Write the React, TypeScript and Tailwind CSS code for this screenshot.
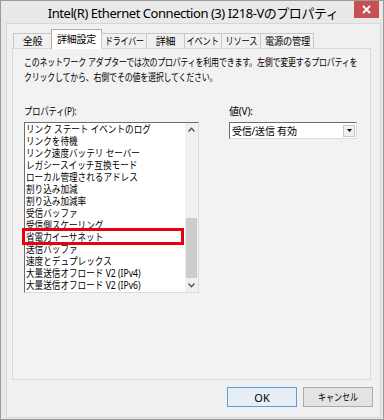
import React from 'react';

const tabs = [
  { label: '全般', w: 39, sx: 'scale-x-100' },
  { label: '詳細設定', w: 51, sx: 'scale-x-100', active: true },
  { label: 'ドライバー', w: 46, sx: 'scale-x-[0.8]' },
  { label: '詳細', w: 39, sx: 'scale-x-100' },
  { label: 'イベント', w: 38, sx: 'scale-x-[0.82]' },
  { label: 'リソース', w: 40, sx: 'scale-x-[0.82]' },
  { label: '電源の管理', w: 54, sx: 'scale-x-[0.92]' },
];

const items = [
  'リンク ステート イベントのログ',
  'リンクを待機',
  'リンク速度バッテリ セーバー',
  'レガシースイッチ互換モード',
  'ローカル管理されるアドレス',
  '割り込み加減',
  '割り込み加減率',
  '受信バッファ',
  '受信側スケーリング',
  '省電力イーサネット',
  '送信バッファ',
  '速度とデュプレックス',
  '大量送信オフロード V2 (IPv4)',
  '大量送信オフロード V2 (IPv6)',
];

const Chevron: React.FC<{ up?: boolean }> = ({ up }) => (
  <svg width="7" height="5" viewBox="0 0 7 5" className="block">
    <polyline
      points={up ? '0.5,4.5 3.5,1.2 6.5,4.5' : '0.5,0.5 3.5,3.8 6.5,0.5'}
      fill="none"
      stroke="#505050"
      strokeWidth="1.3"
    />
  </svg>
);

export default function App() {
  return (
    <div className="w-[384px] h-[420px] bg-[#e9e9e9] border border-[#9a9a9a] flex flex-col text-black [font-family:'Noto_Sans','Noto_Sans_CJK_JP',sans-serif] overflow-hidden">
      {/* title bar */}
      <div className="h-[22px] relative flex items-center justify-center">
        <span className="text-[13px] leading-none tracking-[-0.45px] pl-[2px] pt-[3px] whitespace-nowrap">
          Intel(R) Ethernet Connection (3) I218-Vのプロパティ
        </span>
        <div className="absolute right-[4px] top-[-1px] w-[25px] h-[18px] bg-[#c75050] flex items-center justify-center">
          <svg width="9" height="9" viewBox="0 0 9 9">
            <path d="M1 1 L8 8 M8 1 L1 8" stroke="#fff" strokeWidth="1.8" />
          </svg>
        </div>
      </div>

      {/* client area */}
      <div className="ml-[5px] w-[375px] h-[395px] bg-[#f0f0f0] border border-[#d6d6d6] pl-[5px] pt-[5px] flex flex-col">
        {/* tabs */}
        <div className="h-[20px] mb-[-1px] flex items-end pl-[1px] relative z-10">
          {tabs.map((t, i) => (
            <div
              key={t.label}
              style={{ width: t.w }}
              className={
                t.active
                  ? 'h-[20px] ml-[-1px] bg-white border border-b-0 border-[#adadad] flex items-center justify-center pb-[2px]'
                  : `h-[16px] ${i === 0 ? '' : 'ml-[-1px]'} bg-[#f0f0f0] border border-[#c8c8c8] border-b-[#d9d9d9] flex items-center justify-center`
              }
            >
              <span className={`inline-block ${t.sx} text-[10px] tracking-[-0.2px] leading-none whitespace-nowrap`}>
                {t.label}
              </span>
            </div>
          ))}
        </div>

        {/* tab page */}
        <div className="w-[359px] h-[332px] bg-[#f2f2f2] border border-[#d9d9d9] pl-[11px] pt-[6px]">
          <p className="origin-left scale-x-[0.8] text-[10px] leading-[15px] tracking-[-0.3px] whitespace-nowrap">
            このネットワーク アダプターでは次のプロパティを利用できます。左側で変更するプロパティを
            <br />
            クリックしてから、右側でその値を選択してください。
          </p>

          <div className="mt-[20px] flex">
            {/* property list */}
            <div className="w-[175px]">
              <div className="origin-left scale-x-[0.82] text-[10px] leading-[13px] whitespace-nowrap">プロパティ(P):</div>
              <div className="mt-[4px] relative w-[175px] h-[171px] bg-white border border-t-[#6d6d6d] border-l-[#6d6d6d] border-r-[#dcdcdc] border-b-[#dcdcdc] flex">
                <div className="flex-1 pl-[1px] overflow-hidden">
                  {items.map((it) => (
                    <div key={it} className="h-[12px] leading-[12px] text-[10px] whitespace-nowrap">
                      <span className="inline-block origin-left scale-x-[0.86]">{it}</span>
                    </div>
                  ))}
                </div>
                <div className="w-[13px] bg-[#f0f0f0] flex flex-col">
                  <div className="h-[13px] flex items-center justify-center">
                    <Chevron up />
                  </div>
                  <div className="flex-1 flex flex-col justify-end pb-[1px]">
                    <div className="h-[60px] mx-[1px] bg-[#cdcdcd]" />
                  </div>
                  <div className="h-[13px] flex items-center justify-center">
                    <Chevron />
                  </div>
                </div>
                {/* red annotation */}
                <div className="absolute left-[-3px] top-[105px] w-[162px] h-[17px] border-[3px] border-[#e60012]" />
              </div>
            </div>

            {/* value */}
            <div className="ml-[30px]">
              <div className="text-[10px] leading-[13px] tracking-[-0.2px]">値(V):</div>
              <div className="mt-[4px] w-[128px] h-[17px] bg-white border border-t-[#6d6d6d] border-l-[#6d6d6d] border-r-[#dcdcdc] border-b-[#dcdcdc] flex items-center">
                <span className="flex-1 pl-[2px] text-[10px] tracking-[-0.2px] leading-none">受信/送信 有効</span>
                <div className="w-[12px] h-[12px] mr-[1px] bg-[#f0f0f0] border border-[#c8c8c8] flex items-center justify-center">
                  <svg width="5" height="3" viewBox="0 0 5 3">
                    <polygon points="0,0 5,0 2.5,3" fill="#000" />
                  </svg>
                </div>
              </div>
            </div>
          </div>
        </div>

        {/* buttons */}
        <div className="mt-[7px] flex justify-end gap-[6px] pr-[7px]">
          <button className="w-[70px] h-[20px] bg-[#e8eef5] border border-[#5b9ee0] text-[11px] leading-none">
            OK
          </button>
          <button className="w-[70px] h-[20px] bg-[#e3e3e3] border border-[#acacac] flex items-center justify-center">
            <span className="inline-block scale-x-[0.8] text-[10px] leading-none whitespace-nowrap">キャンセル</span>
          </button>
        </div>
      </div>
    </div>
  );
}
